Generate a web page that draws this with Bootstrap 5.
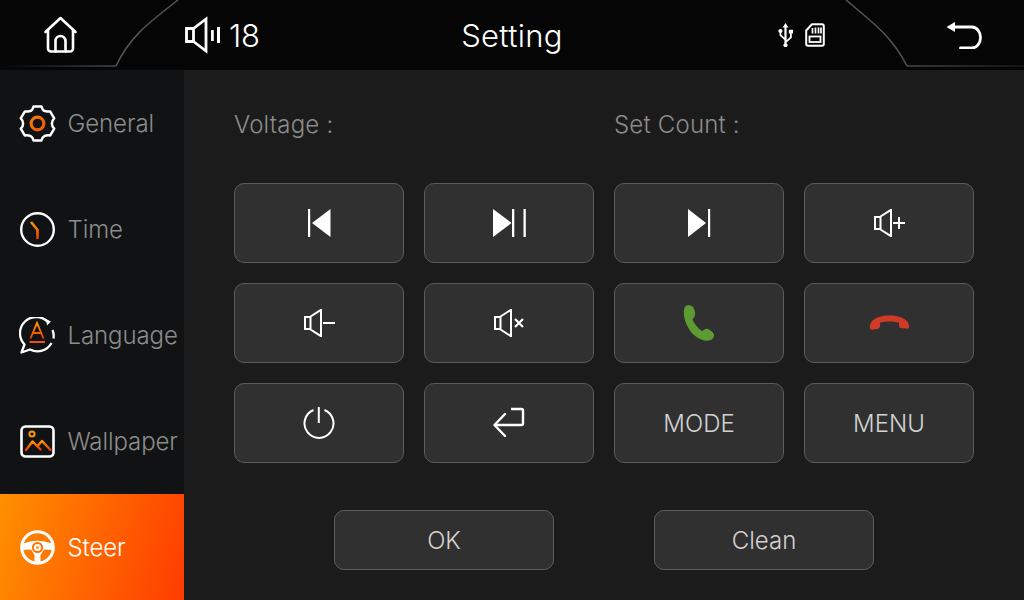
<!DOCTYPE html>
<html lang="en">
<head>
<meta charset="utf-8">
<title>Setting</title>
<link href="https://cdn.jsdelivr.net/npm/bootstrap@5.3.0/dist/css/bootstrap.min.css" rel="stylesheet">
<style>
html,body{width:1024px;height:600px;overflow:hidden;background:#1b1b1b;}
body{font-family:Inter,"Liberation Sans",sans-serif;font-weight:300;}
.shell{width:1024px;height:600px;position:relative;}
.topbar{height:70px;background:#050505;color:#fff;}
.arcs{position:absolute;left:0;top:0;width:1024px;height:70px;pointer-events:none;}
.top-home{width:120px;margin-right:65px;}
.top-left{width:399px;}
.top-num{font-size:31px;line-height:1;margin-left:8px;letter-spacing:-.3px;}
.top-title{width:226px;font-size:31px;line-height:1;text-align:center;font-weight:300;letter-spacing:.3px;}
.top-usb{margin-left:152px;}
.top-sd{margin-left:11px;}
.top-back{margin-left:121px;}
.body-area{height:530px;}
.side{width:184px;background:#111213;}
.side-item{height:106px;padding-left:19px;color:#8c8c8c;font-size:24px;letter-spacing:-.1px;text-decoration:none;}
.side-item svg{margin-right:12px;flex:none;}
.side-txt{padding-top:2px;margin-left:-.5px;}
.side-on{background:linear-gradient(105deg,#ff9000,#ff3c00);color:#fff;}
.pane{width:840px;background:#1b1b1b;padding:0 50px;}
.labels{height:113px;color:#8c8c8c;font-size:24px;letter-spacing:.2px;}
.label-cell{flex:0 0 380px;line-height:1;margin-top:43px;}
.key-grid{display:grid;grid-template-columns:repeat(4,170px);grid-auto-rows:80px;gap:20px;}
.key{background:#303030;border:1px solid #5c5c5c;border-radius:10px;color:#d2d2d2;font-size:24px;font-weight:300;padding:0;display:flex;align-items:center;justify-content:center;}
.key:hover,.key:active{background:#303030;border-color:#5c5c5c;color:#d2d2d2;}
.key-word{padding-top:2px;}
.actions{margin-top:47px;padding-left:100px;gap:100px;}
.act{width:220px;height:60px;}
</style>
</head>
<body>
<div class="shell">
  <svg width="0" height="0" class="position-absolute">
    <defs>
      <linearGradient id="ora" x1="0" y1="0" x2="0" y2="1"><stop offset="0" stop-color="#ff9a00"/><stop offset="1" stop-color="#ee3a08"/></linearGradient>
      <linearGradient id="orb" gradientUnits="userSpaceOnUse" x1="0" y1="0" x2="36" y2="36"><stop offset="0" stop-color="#ff9a00"/><stop offset="1" stop-color="#e83808"/></linearGradient>
    </defs>
  </svg>

  <header class="topbar d-flex align-items-center">
    <div class="top-left d-flex align-items-center">
      <div class="top-home d-flex justify-content-center">
        <svg width="36" height="38" viewBox="0 0 36 38" fill="none" stroke="#fff" stroke-width="2.6" stroke-linejoin="round" stroke-linecap="round">
          <path d="M3.5 16 18.500 2 33.500 16"/><path d="M6 14.500V32.500a3 3 0 0 0 3 3h19a3 3 0 0 0 3-3V14.500"/><path d="M13.500 35.500V25a5 5 0 0 1 10 0V35.500"/>
        </svg>
      </div>
      <svg width="36" height="38" viewBox="0 0 36 38" fill="none">
        <path d="M1.500 12.500H8.500V25.500H1.500Z M8.500 12.500 21 3V35L8.500 25.500" stroke="#fff" stroke-width="2.8" stroke-linejoin="miter"/>
        <rect x="26" y="14" width="2.8" height="11" fill="#fff"/><rect x="32" y="11" width="3" height="16" fill="#fff"/>
      </svg>
      <span class="top-num">18</span>
    </div>
    <div class="top-title">Setting</div>
    <svg class="top-usb" width="17" height="24" viewBox="0 0 17 24" fill="#fff">
      <path d="M8.500 0 11.500 4.500H9.600V17.200L13 14V10.500H11.800V6.800H16V10.500H14.800V14.800L9.600 19.600V20.600A2 2 0 1 1 7.400 20.600V17L2.600 12.600V10A2.100 2.100 0 1 1 4.300 10V11.800L7.400 14.700V4.500H5.500Z"/>
    </svg>
    <svg class="top-sd" width="20" height="24" viewBox="0 0 20 24" fill="none" stroke="#fff">
      <path d="M7 1.200H17A1.800 1.800 0 0 1 18.800 3V21A1.800 1.800 0 0 1 17 22.800H3A1.800 1.800 0 0 1 1.200 21V7.500Z" stroke-width="2" stroke-linejoin="round"/>
      <path d="M7.500 5V10.500M10.500 4.500V10.500M13.500 4.500V10.500M16 4.500V10.500" stroke-width="1.7"/>
      <rect x="4.500" y="13.500" width="11" height="5.500" stroke-width="1.8"/>
    </svg>
    <svg class="top-back" width="37" height="28" viewBox="0 0 37 28" fill="none">
      <path d="M0.500 6 9 1V11Z" fill="#fff"/>
      <path d="M8 6H26A8.500 10.500 0 0 1 26 27H14.500" stroke="#fff" stroke-width="2.8" stroke-linecap="round"/>
    </svg>
  </header>
  <svg class="arcs" viewBox="0 0 1024 70" fill="none">
    <defs>
      <linearGradient id="fl" gradientUnits="userSpaceOnUse" x1="0" y1="0" x2="116" y2="0"><stop offset="0" stop-color="#444" stop-opacity="0"/><stop offset="1" stop-color="#4a4a4a"/></linearGradient>
      <linearGradient id="fr" gradientUnits="userSpaceOnUse" x1="907" y1="0" x2="1024" y2="0"><stop offset="0" stop-color="#4a4a4a"/><stop offset="1" stop-color="#444" stop-opacity=".3"/></linearGradient>
    </defs>
    <path d="M0 66H116" stroke="url(#fl)" stroke-width="1.5"/>
    <path d="M116 66C130 36 150 22 178 0" stroke="#555" stroke-width="1.5"/>
    <path d="M846 0C872 22 892 36 907 66" stroke="#555" stroke-width="1.5"/>
    <path d="M907 66H1024" stroke="url(#fr)" stroke-width="1.5"/>
  </svg>

  <div class="body-area d-flex">
    <nav class="side d-flex flex-column">
      <a class="side-item d-flex align-items-center" href="#">
        <svg width="37" height="37" viewBox="0 0 36 36" fill="none">
          <path d="M14.200 1.400H21.800Q23 5.500 25 5.900Q28 6.500 30.400 6.400L34.300 13Q32 15 32 18Q32 21 34.300 23L30.400 29.600Q27.500 29 25 30.100Q22.500 31.500 21.800 34.600H14.200Q13.500 31.500 11 30.100Q8.500 29 5.600 29.600L1.700 23Q4 21 4 18Q4 15 1.700 13L5.600 6.400Q8 6.500 11 5.900Q13 5.500 14.200 1.400Z" stroke="#fff" stroke-width="2.4" stroke-linejoin="round"/>
          <circle cx="18" cy="18" r="6.200" stroke="url(#orb)" stroke-width="3"/>
        </svg>
        <span class="side-txt">General</span>
      </a>
      <a class="side-item d-flex align-items-center" href="#">
        <svg width="37" height="37" viewBox="0 0 37 37" fill="none">
          <circle cx="18.500" cy="18.500" r="16.300" stroke="#fff" stroke-width="2.4"/>
          <path d="M12 11 18.500 19V28" stroke="url(#ora)" stroke-width="2.6"/>
        </svg>
        <span class="side-txt">Time</span>
      </a>
      <a class="side-item d-flex align-items-center" href="#">
        <svg width="37" height="37" viewBox="0 0 37 37" fill="none">
          <path d="M29 5A16 16 0 0 0 5.500 27.500L2.500 35.500 11 32.500A16 16 0 0 0 32.500 26M34.500 21.500A16 16 0 0 0 33.500 13" stroke="#fff" stroke-width="2.3" stroke-linejoin="round"/>
          <path d="M27 2 32 4.500 28 8.500Z" fill="#fff"/>
          <path d="M11.500 21.500 18 6 24.500 21.500M14 16H22" stroke="url(#ora)" stroke-width="1.9"/>
          <path d="M10.500 25H26" stroke="#f05010" stroke-width="2"/>
        </svg>
        <span class="side-txt">Language</span>
      </a>
      <a class="side-item d-flex align-items-center" href="#">
        <svg width="37" height="37" viewBox="0 0 37 37" fill="none">
          <rect x="2.500" y="3.500" width="32" height="30" rx="4" stroke="#fff" stroke-width="2.6"/>
          <circle cx="13" cy="11" r="2.600" stroke="#ff9400" stroke-width="2"/>
          <path d="M7 27 13.500 18.500 21.500 26.500M19 22.500 23 18 31.500 27" stroke="url(#ora)" stroke-width="2.4" stroke-linecap="round" stroke-linejoin="round"/>
        </svg>
        <span class="side-txt">Wallpaper</span>
      </a>
      <a class="side-item side-on d-flex align-items-center" href="#">
        <svg width="37" height="37" viewBox="0 0 37 37" fill="none">
          <circle cx="18.500" cy="18.500" r="15.800" stroke="#fff" stroke-width="3"/>
          <path d="M4 14.500Q18.500 9 33 14.500L33.500 21 25 20.500 21.500 26 21.500 33.500H15.500V26L12 20.500 3.500 21Z" fill="#fff"/>
          <circle cx="18.500" cy="18.500" r="5.600" fill="#ff7300"/>
          <circle cx="18.500" cy="18.500" r="3.600" fill="#fff"/>
          <circle cx="18.500" cy="18.500" r="1.600" fill="#ffa040"/>
        </svg>
        <span class="side-txt">Steer</span>
      </a>
    </nav>

    <main class="pane">
      <div class="labels d-flex align-items-start">
        <div class="label-cell">Voltage :</div>
        <div class="label-cell">Set Count :</div>
      </div>
      <div class="key-grid">
        <button type="button" class="btn key" aria-label="Previous">
          <svg width="28" height="28" viewBox="0 0 28 28" fill="#fff"><rect x="3" width="2.200" height="28"/><path d="M7 14 25.500 0V28Z"/></svg>
        </button>
        <button type="button" class="btn key" aria-label="Play pause">
          <svg width="34" height="28" viewBox="0 0 34 28" fill="#fff"><path d="M1 0 19.500 14 1 28Z"/><rect x="20" width="2.300" height="28"/><rect x="31.500" width="2.300" height="28"/></svg>
        </button>
        <button type="button" class="btn key" aria-label="Next">
          <svg width="28" height="28" viewBox="0 0 28 28" fill="#fff"><path d="M3 0 21 14 3 28Z"/><rect x="23" width="2.200" height="28"/></svg>
        </button>
        <button type="button" class="btn key" aria-label="Volume up">
          <svg width="32" height="28" viewBox="0 0 32 28" fill="none" stroke="#fff"><path d="M2 8H7.500V20H2Z M7.500 7.500 18 0.800V27.200L7.500 20.500" stroke-width="2"/><path d="M20 14H32M26 8V20" stroke-width="2"/></svg>
        </button>
        <button type="button" class="btn key" aria-label="Volume down">
          <svg width="32" height="28" viewBox="0 0 32 28" fill="none" stroke="#fff"><path d="M2 8H7.500V20H2Z M7.500 7.500 18 0.800V27.200L7.500 20.500" stroke-width="2"/><path d="M20 14H32" stroke-width="2"/></svg>
        </button>
        <button type="button" class="btn key" aria-label="Mute">
          <svg width="32" height="28" viewBox="0 0 32 28" fill="none" stroke="#fff"><path d="M2 8H7.500V20H2Z M7.500 7.500 18 0.800V27.200L7.500 20.500" stroke-width="2"/><path d="M22 10 30 18M30 10 22 18" stroke-width="2.200"/></svg>
        </button>
        <button type="button" class="btn key" aria-label="Answer">
          <svg width="35" height="40" viewBox="215 385 105 120"><path fill="#5c9a32" d="M235 392C246 392 252 400 254 412C256 424 250 430 246 434C252 448 262 460 276 470C282 462 290 460 298 466C308 472 314 480 310 488C306 496 298 498 288 498C262 496 240 476 228 448C220 428 218 404 224 396C227 393 231 392 235 392Z"/></svg>
        </button>
        <button type="button" class="btn key" aria-label="Hang up">
          <svg width="43" height="21" viewBox="772 412 130 64"><path fill="#d03a26" d="M777 455C776 440 790 428 806 424C825 418 850 418 868 424C884 428 898 440 897 455C897 458 895 460 892 460L872 458C868 458 866 455 866 450V442C850 437 824 437 808 442V450C808 455 806 458 802 460L784 463C780 463 777 460 777 455Z"/></svg>
        </button>
        <button type="button" class="btn key" aria-label="Power">
          <svg width="32" height="32" viewBox="0 0 32 32" fill="none" stroke="#fff" stroke-width="2"><path d="M10.500 3A14.500 14.500 0 1 0 21.500 3"/><path d="M15.800 0V16"/></svg>
        </button>
        <button type="button" class="btn key" aria-label="Back">
          <svg width="32" height="32" viewBox="0 0 32 32" fill="none" stroke="#fff" stroke-width="2.400"><path d="M1.500 18H28.500A1.500 1.500 0 0 0 30 16.500V3.500A1.500 1.500 0 0 0 28.500 2H18"/><path d="M12 7 1.500 18 12 29" stroke-linecap="round" stroke-linejoin="round"/></svg>
        </button>
        <button type="button" class="btn key key-word">MODE</button>
        <button type="button" class="btn key key-word">MENU</button>
      </div>
      <div class="actions d-flex">
        <button type="button" class="btn key key-word act">OK</button>
        <button type="button" class="btn key key-word act">Clean</button>
      </div>
    </main>
  </div>
</div>
</body>
</html>
